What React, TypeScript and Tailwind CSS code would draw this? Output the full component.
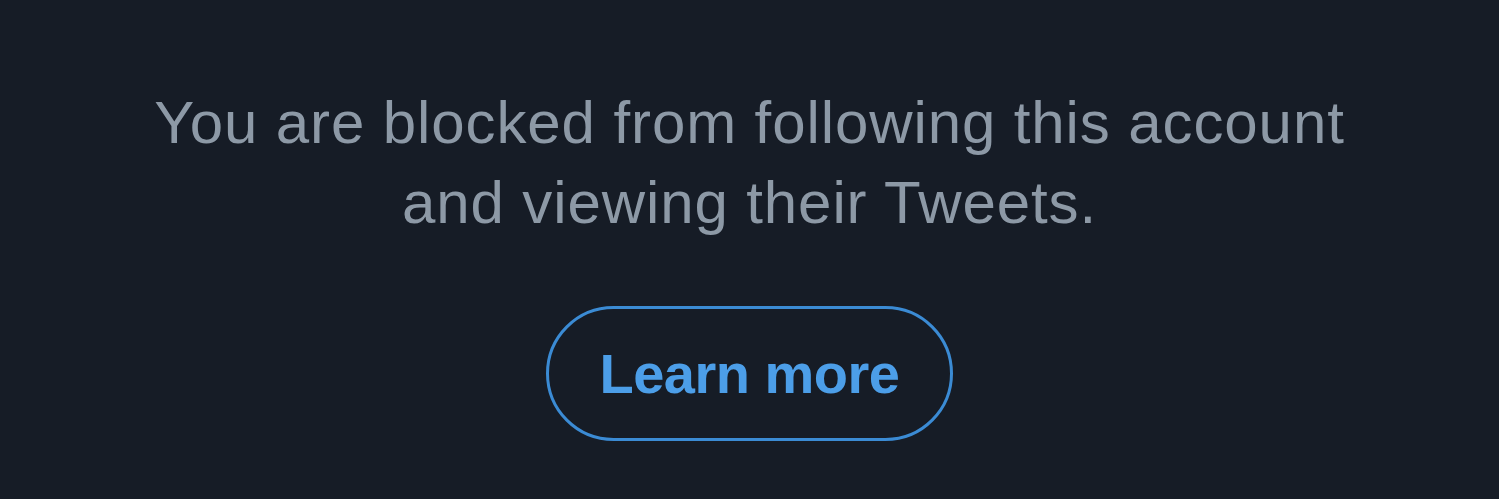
export default function App() {
  return (
    <div className="w-[1499px] h-[499px] bg-[#161c26] flex flex-col items-center overflow-hidden" style={{ fontFamily: '"Liberation Sans", Arial, sans-serif' }}>
      <p className="mt-[83px] text-center text-[60px] leading-[80px] text-[#8d99a6] tracking-[0.9px]">
        You are blocked from following this account
        <br />
        and viewing their Tweets.
      </p>
      <button className="mt-[63px] w-[407px] h-[135px] rounded-full border-[3px] border-[#3b8bd4] text-[#4c9ee8] text-[56px] font-bold tracking-[-0.5px]">
        Learn more
      </button>
    </div>
  );
}
